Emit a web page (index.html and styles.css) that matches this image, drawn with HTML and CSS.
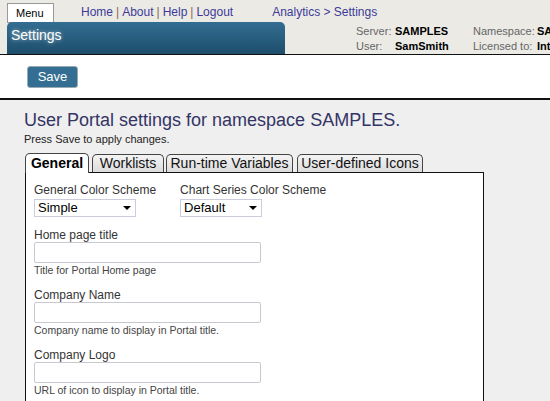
FILE: index.html
```
<!DOCTYPE html>
<html>
<head>
<meta charset="utf-8">
<link rel="stylesheet" href="styles.css">
</head>
<body>
<div class="header">
  <div class="toprow">
    <div class="menu-btn">Menu</div>
    <div class="links"><a>Home</a><span class="sep">|</span><a>About</a><span class="sep">|</span><a>Help</a><span class="sep">|</span><a>Logout</a></div>
    <div class="crumb">Analytics &gt; Settings</div>
  </div>
  <div class="bottomrow">
    <div class="titlebar">Settings</div>
    <div class="info">
      <span class="k">Server:</span><span class="v">SAMPLES</span><span class="k">Namespace:</span><span class="v">SAMPLES</span>
      <span class="k">User:</span><span class="v">SamSmith</span><span class="k">Licensed to:</span><span class="v">InterSystems</span>
    </div>
  </div>
</div>
<div class="toolbar">
  <div class="save-btn">Save</div>
</div>
<div class="main">
  <h1 class="title">User Portal settings for namespace SAMPLES.</h1>
  <div class="subtitle">Press Save to apply changes.</div>
  <div class="tabs">
    <div class="tab active">General</div>
    <div class="tab t2">Worklists</div>
    <div class="tab t3">Run-time Variables</div>
    <div class="tab t4">User-defined Icons</div>
  </div>
  <div class="panel">
    <div class="row">
      <div class="field">
        <div class="label">General Color Scheme</div>
        <div class="select s1"><span>Simple</span><i class="arrow"></i></div>
      </div>
      <div class="field">
        <div class="label">Chart Series Color Scheme</div>
        <div class="select s2"><span>Default</span><i class="arrow"></i></div>
      </div>
    </div>
    <div class="field block">
      <div class="label">Home page title</div>
      <div class="input"></div>
      <div class="hint">Title for Portal Home page</div>
    </div>
    <div class="field block">
      <div class="label">Company Name</div>
      <div class="input"></div>
      <div class="hint">Company name to display in Portal title.</div>
    </div>
    <div class="field block">
      <div class="label">Company Logo</div>
      <div class="input"></div>
      <div class="hint">URL of icon to display in Portal title.</div>
    </div>
  </div>
</div>
</body>
</html>
```
FILE: styles.css
```
* { box-sizing: border-box; }
html, body { margin: 0; padding: 0; }
body {
  width: 550px;
  height: 401px;
  overflow: hidden;
  font-family: "Liberation Sans", Arial, sans-serif;
  background: #efefef;
}
.header {
  background: #ebeae5;
  height: 55px;
  border-bottom: 1px solid #111;
  padding: 2px 0 0 7px;
}
.toprow {
  display: flex;
  align-items: center;
  height: 20px;
  white-space: nowrap;
}
.menu-btn {
  flex-shrink: 0;
  width: 47px;
  height: 20px;
  background: #fff;
  border: 1px solid #999;
  font-size: 11px;
  color: #000;
  line-height: 18px;
  padding-left: 8px;
  margin-top: 1px;
}
.links {
  margin-left: 27px;
  font-size: 12px;
  color: #3d3a99;
}
.links a { color: #3d3a99; }
.links .sep { color: #8a6a50; padding: 0 3px; }
.crumb {
  margin-left: 39px;
  font-size: 12px;
  color: #3d3a99;
}
.bottomrow {
  display: flex;
  white-space: nowrap;
}
.titlebar {
  flex-shrink: 0;
  width: 278px;
  height: 32px;
  background: linear-gradient(#336d92, #1d4e6b);
  border-radius: 5px 5px 0 0;
  color: #fff;
  font-size: 14px;
  padding: 5px 0 0 4px;
  text-shadow: 0 0 4px rgba(255,255,255,0.6);
}
.info {
  flex-shrink: 0;
  display: grid;
  grid-template-columns: 39px 78px 64px auto;
  grid-auto-rows: 15px;
  margin-left: 71px;
  padding-top: 2px;
  font-size: 11px;
  line-height: 15px;
}
.info .k { color: #666; }
.info .v { color: #000; font-weight: bold; }
.toolbar {
  background: #fff;
  height: 45px;
  border-bottom: 2px solid #111;
  padding: 11px 0 0 27px;
}
.save-btn {
  width: 51px;
  height: 22px;
  background: #346e92;
  border: 1px solid #9aaab5;
  border-radius: 3px;
  color: #fff;
  font-size: 13px;
  line-height: 20px;
  text-align: center;
}
.main {
  padding: 9px 0 0 24px;
}
.title {
  margin: 0;
  font-weight: normal;
  font-size: 18px;
  line-height: 22px;
  color: #343466;
}
.subtitle {
  font-size: 11px;
  color: #222;
  margin-top: 2px;
  line-height: 13px;
}
.tabs {
  display: flex;
  align-items: flex-end;
  margin-top: 7px;
  margin-left: 1px;
  height: 19px;
  position: relative;
  z-index: 1;
}
.tab {
  height: 18px;
  border: 1px solid #444;
  border-bottom: none;
  border-radius: 5px 5px 0 0;
  background: linear-gradient(#f4f4f4, #dcdcdc);
  font-size: 14px;
  line-height: 17px;
  padding: 0 4px;
  color: #111;
  margin-right: 2px;
  text-align: center;
}
.tab.active {
  width: 64px;
  height: 20px;
  background: #fff;
  font-weight: bold;
  color: #000;
  margin-bottom: -1px;
  padding: 1px 0 0;
  margin-right: 3px;
}
.tab.t2 { width: 72px; padding: 0; }
.tab.t3 { width: 127px; padding: 0; margin-right: 4px; }
.tab.t4 { width: 126px; padding: 0; }
.panel {
  width: 459px;
  height: 260px;
  margin-left: 1px;
  background: #fff;
  border: 1px solid #111;
  padding: 10px 0 0 8px;
}
.row {
  display: flex;
  gap: 24px;
}
.label {
  font-size: 12px;
  color: #333;
  line-height: 14px;
}
.select {
  margin-top: 2px;
  height: 18px;
  border: 1px solid #ccd;
  background: #fff;
  font-size: 13px;
  color: #000;
  padding-left: 3px;
  line-height: 16px;
  display: flex;
  justify-content: space-between;
  align-items: center;
}
.s1 { width: 102px; }
.s2 { width: 82px; }
.arrow {
  width: 0;
  height: 0;
  border-left: 4px solid transparent;
  border-right: 4px solid transparent;
  border-top: 4px solid #000;
  margin-right: 4px;
}
.row + .block { margin-top: 11px; }
.block + .block { margin-top: 12px; }
.input {
  width: 227px;
  height: 21px;
  border: 1px solid #c8c8d0;
  border-radius: 2px;
  background: #fff;
}
.hint {
  font-size: 10.5px;
  color: #444;
  margin-top: 1px;
  line-height: 12px;
}
```
